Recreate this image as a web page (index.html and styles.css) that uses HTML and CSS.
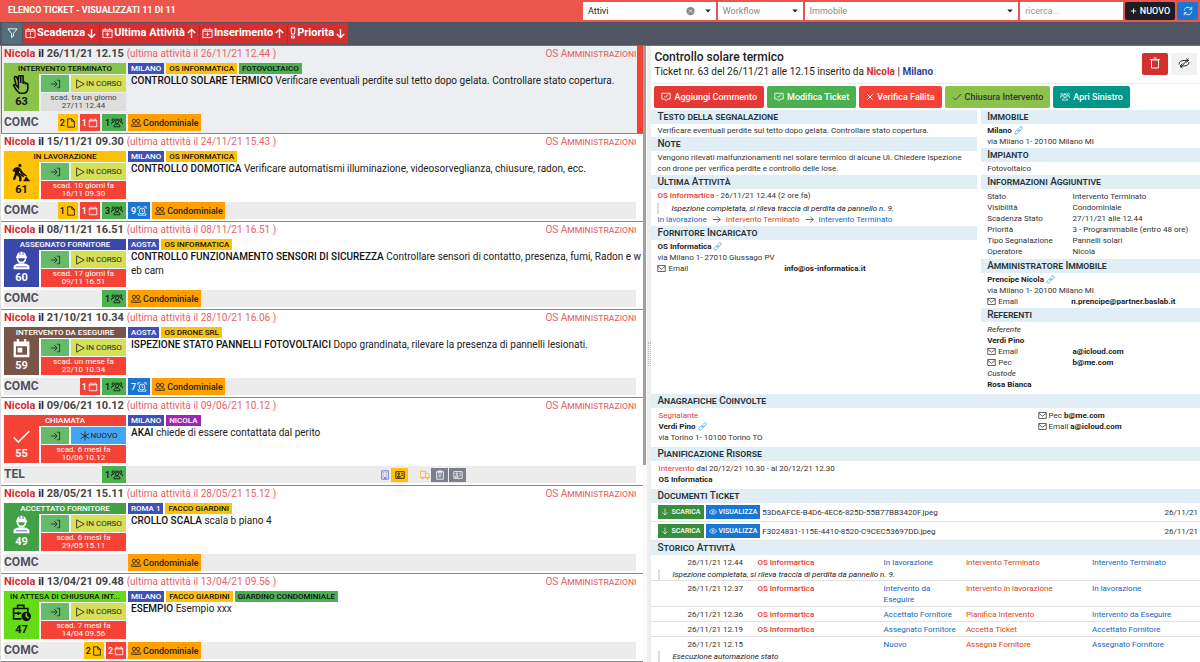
FILE: index.html
```html
<!DOCTYPE html>
<html lang="it">
<head>
<meta charset="utf-8">
<meta name="viewport" content="width=device-width, initial-scale=1">
<title>Elenco Ticket</title>
<link rel="stylesheet" href="styles.css">
</head>
<body>
<svg class="sprite" aria-hidden="true">
  <symbol id="filter" viewBox="0 0 24 24"><path d="M2 3h20l-8 10v6l-4 3v-9z"/></symbol>
  <symbol id="cal-alert" viewBox="0 0 24 24"><path d="M2 5h20v17H2zM2 8h20M7 1v4M17 1v4M12 11v5M12 18v2"/></symbol>
  <symbol id="cal-star" viewBox="0 0 24 24"><path d="M2 5h20v17H2zM2 8h20M7 1v4M17 1v4M12 11v8M8 13l8 4M16 13l-8 4"/></symbol>
  <symbol id="cal-plus" viewBox="0 0 24 24"><path d="M2 5h20v17H2zM2 8h20M7 1v4M17 1v4M12 11v8M8 15h8"/></symbol>
  <symbol id="cal" viewBox="0 0 24 24"><path d="M3 5h18v16H3zM3 7h18M7 1v4M17 1v4"/></symbol>
  <symbol id="prio" viewBox="6 0 12 24"><path d="M8 2h8l-1 12H9zM9 18h6v4H9z"/></symbol>
  <symbol id="down" viewBox="0 0 24 24"><path d="M12 2v19M4 13l8 8 8-8"/></symbol>
  <symbol id="up" viewBox="0 0 24 24"><path d="M12 22V3M4 11l8-8 8 8"/></symbol>
  <symbol id="right" viewBox="0 0 24 24"><path d="M2 12h19M14 4l8 8-8 8"/></symbol>
  <symbol id="login" viewBox="0 0 24 24"><path d="M1 12h14M9 5l7 7-7 7M16 3h6v18h-6"/></symbol>
  <symbol id="play" viewBox="0 0 24 24"><path d="M4 2l18 10L4 22z"/></symbol>
  <symbol id="snow" viewBox="0 0 24 24"><path d="M12 1v22M2 6l20 12M22 6L2 18"/></symbol>
  <symbol id="page" viewBox="0 0 24 24"><path d="M4 2h10l6 6v14H4zM14 2v6h6"/></symbol>
  <symbol id="groups" viewBox="0 0 28 24"><circle cx="14" cy="9" r="4"/><circle cx="5" cy="5" r="3"/><circle cx="23" cy="5" r="3"/><path d="M7 21v-2c0-6 14-6 14 0v2zM1 15v-3c0-2 3-2 6-2M27 15v-3c0-2-3-2-6-2M10 3h8"/></symbol>
  <symbol id="people" viewBox="0 0 24 24"><circle cx="7" cy="7" r="4"/><circle cx="17" cy="7" r="4"/><path d="M1 20v-2c0-5 11-5 11 0v2zM12 20h11v-2c0-4-6-5-9-3"/></symbol>
  <symbol id="alarm" viewBox="0 0 24 24"><circle cx="12" cy="12" r="7"/><path d="M12 8v4l3 2M2 7V2h6M22 7V2h-6M3 17v5h18v-5"/></symbol>
  <symbol id="hand" viewBox="0 0 24 24"><path d="M8 15V3c0-3 3-3 3 0v7V2c0-2 3-2 3 0v9c0-3 3-3 3 0v1c0-2 3-2 3 0v5c0 3-2 5-4 6h-6C6 21 4 17 2 13c1-2 4 0 6 3V7L6 3C5 1 3 2 3 4l2 8"/></symbol>
  <symbol id="digger" viewBox="0 0 24 24"><circle class="solid" cx="10" cy="3" r="2"/><path class="solid" d="M2 7l4-2 4 1 4 6 5 4-1 1-6-3-3-4-1 4 4 3v6H9v-5l-3-3-2 6H1l3-9V9L2 10z"/><path d="M1 9l14 8"/><path class="solid" d="M14 23l4-6 5 6z"/></symbol>
  <symbol id="engineer" viewBox="0 0 24 24"><path class="solid" d="M6 7c0-8 12-8 12 0h1v2H5V7zM2 23v-3c0-6 20-6 20 0v3z"/><path d="M7 9c0 7 10 7 10 0"/><path class="cut" d="M5 20h14M10 1v4M14 1v4"/></symbol>
  <symbol id="event" viewBox="0 0 24 24"><path class="solid" fill-rule="evenodd" d="M2 3h4V0h3v3h6V0h3v3h4v20H2zM5 9v11h14V9zM7 11h6v6H7z"/></symbol>
  <symbol id="check" viewBox="0 0 24 24"><path d="M2 13l6 6L22 5"/></symbol>
  <symbol id="case" viewBox="0 0 24 24"><path d="M12 20H2V7h18v5M7 7V3h8v4M2 13h10M8 11v4"/><circle class="solid" cx="18" cy="17" r="6"/><path class="clock-hand" d="M18 13v4l3 2"/></symbol>
  <symbol id="building" viewBox="0 0 24 24"><path d="M4 2h16v20H4zM8 6h2M14 6h2M8 11h2M14 11h2M8 16h2M14 16h2M11 22v-4h3v4"/></symbol>
  <symbol id="card" viewBox="0 0 24 24"><path d="M2 4h20v16H2zM15 9h4M15 13h4M5 17c0-4 8-4 8 0z"/><circle cx="9" cy="9" r="2"/></symbol>
  <symbol id="truck" viewBox="0 0 24 24"><path d="M1 3h12v15H1zM13 8h6l4 5v5H13"/><circle cx="6" cy="20" r="2"/><circle cx="18" cy="20" r="2"/></symbol>
  <symbol id="clip" viewBox="0 0 24 24"><path d="M4 4h16v18H4zM8 2h8v5H8zM8 12h8M8 16h6"/></symbol>
  <symbol id="comment" viewBox="0 0 24 24"><path d="M2 3h20v14h-7l-3 4-3-4H2zM8 10l3 3 6-7"/></symbol>
  <symbol id="x" viewBox="0 0 24 24"><path d="M4 4l16 16M20 4L4 20"/></symbol>
  <symbol id="plus" viewBox="0 0 24 24"><path d="M12 3v18M3 12h18"/></symbol>
  <symbol id="mail" viewBox="0 0 24 24"><path d="M2 4h20v16H2zM2 6l10 8 10-8"/></symbol>
  <symbol id="link" viewBox="0 0 24 24"><path d="M10 15l7-7M12 7l4-4c4-3 8 2 5 5l-5 5c-2 2-5 1-6-1M12 17l-4 4c-4 3-8-2-5-5l5-5c2-2 5-1 6 1"/></symbol>
  <symbol id="eye" viewBox="0 0 24 24"><path d="M1 12c5-9 17-9 22 0-5 9-17 9-22 0z"/><circle cx="12" cy="12" r="3"/></symbol>
  <symbol id="trash" viewBox="0 0 24 24"><path d="M5 6h14v16H5zM2 5h20M9 2h6"/></symbol>
  <symbol id="unsync" viewBox="0 0 24 24"><path d="M2 15c0-6 5-8 10-8h9M16 3l5 4-5 4M22 10c0 6-5 8-10 8H4M9 13l-5 5 5 4M5 21L21 3"/></symbol>
  <symbol id="refresh" viewBox="0 0 24 24"><path d="M3 11c0-8 12-11 17-4M21 2v6h-6M21 13c0 8-12 11-17 4M3 22v-6h6"/></symbol>
  <symbol id="clear" viewBox="0 0 24 24"><circle class="solid" cx="12" cy="12" r="11"/><path class="cut-white" d="M8 8l8 8M16 8l-8 8"/></symbol>
  <symbol id="caret" viewBox="0 0 24 24"><path class="solid" d="M1 6h22L12 18z"/></symbol>
</svg>

<header class="topbar">
  <h1 class="topbar-title">ELENCO TICKET - VISUALIZZATI 11 DI 11</h1>
  <form class="filters">
    <label class="field field-state"><select aria-label="Stato"><option>Attivi</option></select><svg class="ic ic-clear"><use href="#clear"/></svg><svg class="ic ic-caret"><use href="#caret"/></svg></label>
    <label class="field"><select class="hint" aria-label="Workflow"><option>Workflow</option></select><svg class="ic ic-caret"><use href="#caret"/></svg></label>
    <label class="field"><select class="hint" aria-label="Immobile"><option>Immobile</option></select><svg class="ic ic-caret"><use href="#caret"/></svg></label>
    <label class="field"><input type="text" placeholder="ricerca..." aria-label="Ricerca"></label>
    <button type="button" class="btn-new"><svg class="ic bold"><use href="#plus"/></svg>NUOVO</button>
    <button type="button" class="btn-refresh" aria-label="Aggiorna"><svg class="ic"><use href="#refresh"/></svg></button>
  </form>
</header>

<nav class="toolbar">
  <button class="sort sort-filter" aria-label="Filtra"><svg class="ic"><use href="#filter"/></svg></button>
  <button class="sort"><svg class="ic"><use href="#cal-alert"/></svg>Scadenza<svg class="ic arrow"><use href="#down"/></svg></button>
  <button class="sort"><svg class="ic"><use href="#cal-star"/></svg>Ultima Attività<svg class="ic arrow"><use href="#up"/></svg></button>
  <button class="sort"><svg class="ic"><use href="#cal-plus"/></svg>Inserimento<svg class="ic arrow"><use href="#up"/></svg></button>
  <button class="sort"><svg class="ic narrow"><use href="#prio"/></svg>Priorita<svg class="ic arrow"><use href="#down"/></svg></button>
</nav>

<main class="split">
  <section class="list-pane">
    <div class="tickets">
      <article class="ticket selected">
        <header class="t-head"><p><b class="who">Nicola</b> <b>il</b> <b class="when">26/11/21 12.15</b> <span class="last">(ultima attività il 26/11/21 12.44 )</span></p><p class="admin">OS Amministrazioni</p></header>
        <div class="t-main">
          <div class="status s-lime"><p class="s-title">INTERVENTO TERMINATO</p><div class="s-num"><svg class="ic big"><use href="#hand"/></svg>63</div><div class="s-in"><svg class="ic"><use href="#login"/></svg></div><div class="s-state"><svg class="ic"><use href="#play"/></svg>IN CORSO</div><p class="s-due soft">scad. tra un giorno<br>27/11 12.44</p></div>
          <div class="t-body"><p class="tags"><span class="tag indigo">MILANO</span><span class="tag amber">OS INFORMATICA</span><span class="tag green">FOTOVOLTAICO</span></p><p class="desc"><b>CONTROLLO SOLARE TERMICO</b> Verificare eventuali perdite sul tetto dopo gelata. Controllare stato copertura.</p></div>
        </div>
        <footer class="t-foot"><div class="f-left"><b class="kind">COMC</b><span class="badge amber">2<svg class="ic"><use href="#page"/></svg></span><span class="badge red">1<svg class="ic"><use href="#cal"/></svg></span><span class="badge green">1<svg class="ic wide"><use href="#groups"/></svg></span></div><span class="badge orange"><svg class="ic wide"><use href="#people"/></svg>Condominiale</span></footer>
      </article>

      <article class="ticket">
        <header class="t-head"><p><b class="who">Nicola</b> <b>il</b> <b class="when">15/11/21 09.30</b> <span class="last">(ultima attività il 24/11/21 15.43 )</span></p><p class="admin">OS Amministrazioni</p></header>
        <div class="t-main">
          <div class="status s-amber"><p class="s-title">IN LAVORAZIONE</p><div class="s-num"><svg class="ic big"><use href="#digger"/></svg>61</div><div class="s-in"><svg class="ic"><use href="#login"/></svg></div><div class="s-state"><svg class="ic"><use href="#play"/></svg>IN CORSO</div><p class="s-due">scad. 10 giorni fa<br>16/11 09.30</p></div>
          <div class="t-body"><p class="tags"><span class="tag indigo">MILANO</span><span class="tag amber">OS INFORMATICA</span></p><p class="desc"><b>CONTROLLO DOMOTICA</b> Verificare automatismi illuminazione, videosorveglianza, chiusure, radon, ecc.</p></div>
        </div>
        <footer class="t-foot"><div class="f-left"><b class="kind">COMC</b><span class="badge amber">1<svg class="ic"><use href="#page"/></svg></span><span class="badge red">1<svg class="ic"><use href="#cal"/></svg></span><span class="badge green">3<svg class="ic wide"><use href="#groups"/></svg></span></div><span class="badge blue">9<svg class="ic"><use href="#alarm"/></svg></span><span class="badge orange"><svg class="ic wide"><use href="#people"/></svg>Condominiale</span></footer>
      </article>

      <article class="ticket">
        <header class="t-head"><p><b class="who">Nicola</b> <b>il</b> <b class="when">08/11/21 16.51</b> <span class="last">(ultima attività il 08/11/21 16.51 )</span></p><p class="admin">OS Amministrazioni</p></header>
        <div class="t-main">
          <div class="status s-indigo"><p class="s-title">ASSEGNATO FORNITORE</p><div class="s-num"><svg class="ic big"><use href="#engineer"/></svg>60</div><div class="s-in"><svg class="ic"><use href="#login"/></svg></div><div class="s-state"><svg class="ic"><use href="#play"/></svg>IN CORSO</div><p class="s-due">scad. 17 giorni fa<br>09/11 16.51</p></div>
          <div class="t-body"><p class="tags"><span class="tag indigo">AOSTA</span><span class="tag amber">OS INFORMATICA</span></p><p class="desc"><b>CONTROLLO FUNZIONAMENTO SENSORI DI SICUREZZA</b> Controllare sensori di contatto, presenza, fumi, Radon e web cam</p></div>
        </div>
        <footer class="t-foot"><div class="f-left"><b class="kind">COMC</b><span class="badge green">1<svg class="ic wide"><use href="#groups"/></svg></span></div><span class="badge orange"><svg class="ic wide"><use href="#people"/></svg>Condominiale</span></footer>
      </article>

      <article class="ticket">
        <header class="t-head"><p><b class="who">Nicola</b> <b>il</b> <b class="when">21/10/21 10.34</b> <span class="last">(ultima attività il 28/10/21 16.06 )</span></p><p class="admin">OS Amministrazioni</p></header>
        <div class="t-main">
          <div class="status s-brown"><p class="s-title">INTERVENTO DA ESEGUIRE</p><div class="s-num"><svg class="ic big"><use href="#event"/></svg>59</div><div class="s-in"><svg class="ic"><use href="#login"/></svg></div><div class="s-state"><svg class="ic"><use href="#play"/></svg>IN CORSO</div><p class="s-due">scad. un mese fa<br>22/10 10.34</p></div>
          <div class="t-body"><p class="tags"><span class="tag indigo">AOSTA</span><span class="tag amber">OS DRONE SRL</span></p><p class="desc"><b>ISPEZIONE STATO PANNELLI FOTOVOLTAICI</b> Dopo grandinata, rilevare la presenza di pannelli lesionati.</p></div>
        </div>
        <footer class="t-foot"><div class="f-left"><b class="kind">COMC</b><span class="badge red">1<svg class="ic"><use href="#cal"/></svg></span><span class="badge green">1<svg class="ic wide"><use href="#groups"/></svg></span></div><span class="badge blue">7<svg class="ic"><use href="#alarm"/></svg></span><span class="badge orange"><svg class="ic wide"><use href="#people"/></svg>Condominiale</span></footer>
      </article>

      <article class="ticket">
        <header class="t-head"><p><b class="who">Nicola</b> <b>il</b> <b class="when">09/06/21 10.12</b> <span class="last">(ultima attività il 09/06/21 10.12 )</span></p><p class="admin">OS Amministrazioni</p></header>
        <div class="t-main">
          <div class="status s-red"><p class="s-title">CHIAMATA</p><div class="s-num"><svg class="ic big"><use href="#check"/></svg>55</div><div class="s-in"><svg class="ic"><use href="#login"/></svg></div><div class="s-state new"><svg class="ic"><use href="#snow"/></svg>NUOVO</div><p class="s-due">scad. 6 mesi fa<br>10/06 10.12</p></div>
          <div class="t-body"><p class="tags"><span class="tag indigo">MILANO</span><span class="tag purple">NICOLA</span></p><p class="desc"><b>AKAI</b> chiede di essere contattata dal perito</p></div>
        </div>
        <footer class="t-foot"><div class="f-left"><b class="kind">TEL</b><span class="badge green">1<svg class="ic wide"><use href="#groups"/></svg></span></div>
          <div class="f-icons"><span class="mini lilac"><svg class="ic"><use href="#building"/></svg></span><span class="mini chip amber"><svg class="ic wide"><use href="#card"/></svg></span><span class="mini gold"><svg class="ic"><use href="#truck"/></svg></span><span class="mini chip gray"><svg class="ic"><use href="#clip"/></svg></span><span class="mini chip gray"><svg class="ic wide"><use href="#card"/></svg></span></div></footer>
      </article>

      <article class="ticket">
        <header class="t-head"><p><b class="who">Nicola</b> <b>il</b> <b class="when">28/05/21 15.11</b> <span class="last">(ultima attività il 28/05/21 15.12 )</span></p><p class="admin">OS Amministrazioni</p></header>
        <div class="t-main">
          <div class="status s-green"><p class="s-title">ACCETTATO FORNITORE</p><div class="s-num"><svg class="ic big"><use href="#engineer"/></svg>49</div><div class="s-in"><svg class="ic"><use href="#login"/></svg></div><div class="s-state"><svg class="ic"><use href="#play"/></svg>IN CORSO</div><p class="s-due">scad. 6 mesi fa<br>29/05 15.11</p></div>
          <div class="t-body"><p class="tags"><span class="tag indigo">ROMA 1</span><span class="tag amber">FACCO GIARDINI</span></p><p class="desc"><b>CROLLO SCALA</b> scala b piano 4</p></div>
        </div>
        <footer class="t-foot"><div class="f-left"><b class="kind">COMC</b></div><span class="badge orange"><svg class="ic wide"><use href="#people"/></svg>Condominiale</span></footer>
      </article>

      <article class="ticket">
        <header class="t-head"><p><b class="who">Nicola</b> <b>il</b> <b class="when">13/04/21 09.48</b> <span class="last">(ultima attività il 13/04/21 09.56 )</span></p><p class="admin">OS Amministrazioni</p></header>
        <div class="t-main">
          <div class="status s-bright"><p class="s-title">IN ATTESA DI CHIUSURA INT...</p><div class="s-num"><svg class="ic big"><use href="#case"/></svg>47</div><div class="s-in"><svg class="ic"><use href="#login"/></svg></div><div class="s-state"><svg class="ic"><use href="#play"/></svg>IN CORSO</div><p class="s-due">scad. 7 mesi fa<br>14/04 09.56</p></div>
          <div class="t-body"><p class="tags"><span class="tag indigo">MILANO</span><span class="tag amber">FACCO GIARDINI</span><span class="tag green">GIARDINO CONDOMINIALE</span></p><p class="desc"><b>ESEMPIO</b> Esempio xxx</p></div>
        </div>
        <footer class="t-foot"><div class="f-left"><b class="kind">COMC</b><span class="badge amber">2<svg class="ic"><use href="#page"/></svg></span><span class="badge red">2<svg class="ic"><use href="#cal"/></svg></span></div><span class="badge orange"><svg class="ic wide"><use href="#people"/></svg>Condominiale</span></footer>
      </article>
    </div>
    <div class="scroll"><div class="thumb"></div></div>
  </section>
  <div class="splitter"><div class="grip"></div></div>

  <section class="detail">
    <header class="d-head">
      <div><h2 class="d-title">Controllo solare termico</h2><p class="d-sub">Ticket nr. 63 del 26/11/21 alle 12.15 inserito da <b class="who">Nicola</b> | <b class="place">Milano</b></p></div>
      <div class="d-tools"><button class="tool danger" aria-label="Elimina"><svg class="ic"><use href="#trash"/></svg></button><button class="tool" aria-label="Sincronizzazione"><svg class="ic"><use href="#unsync"/></svg></button></div>
    </header>
    <div class="actions">
      <button class="act a-red"><svg class="ic"><use href="#comment"/></svg>Aggiungi Commento</button>
      <button class="act a-green"><svg class="ic"><use href="#comment"/></svg>Modifica Ticket</button>
      <button class="act a-tomato"><svg class="ic small"><use href="#x"/></svg>Verifica Fallita</button>
      <button class="act a-lime"><svg class="ic"><use href="#check"/></svg>Chiusura Intervento</button>
      <button class="act a-teal"><svg class="ic"><use href="#groups"/></svg>Apri Sinistro</button>
    </div>
    <div class="cols">
      <div class="col">
        <h3 class="sec">Testo della segnalazione</h3>
        <div class="body"><p>Verificare eventuali perdite sul tetto dopo gelata. Controllare stato copertura.</p></div>
        <h3 class="sec">Note</h3>
        <div class="body"><p>Vengono rilevati malfunzionamenti nel solare termico di alcune UI. Chiedere ispezione con drone per verifica perdite e controllo delle lose.</p></div>
        <h3 class="sec">Ultima Attività</h3>
        <div class="body"><p><b class="os">OS Informartica</b> - 26/11/21 12.44 (2 ore fa)</p><blockquote class="quote">Ispezione completata, si rileva traccia di perdita da pannello n. 9.</blockquote><p class="flow"><span class="st">In lavorazione</span><svg class="ic"><use href="#right"/></svg><span class="ev">Intervento Terminato</span><svg class="ic"><use href="#right"/></svg><span class="st">Intervento Terminato</span></p></div>
        <h3 class="sec">Fornitore Incaricato</h3>
        <div class="body"><p><b>OS Informatica</b> <svg class="ic link"><use href="#link"/></svg></p><p>via Milano 1- 27010 Giussago PV</p><dl class="pairs even"><dt><svg class="ic"><use href="#mail"/></svg> Email</dt><dd><b>info@os-informatica.it</b></dd></dl></div>
      </div>
      <div class="col">
        <h3 class="sec">Immobile</h3>
        <div class="body"><p><b>Milano</b> <svg class="ic link"><use href="#link"/></svg></p><p>via Milano 1- 20100 Milano MI</p></div>
        <h3 class="sec">Impianto</h3>
        <div class="body"><p>Fotovoltaico</p></div>
        <h3 class="sec">Informazioni Aggiuntive</h3>
        <div class="body long"><dl class="pairs"><dt>Stato</dt><dd>Intervento Terminato</dd><dt>Visibilità</dt><dd>Condominiale</dd><dt>Scadenza Stato</dt><dd>27/11/21 alle 12.44</dd><dt>Priorità</dt><dd>3 - Programmabile (entro 48 ore)</dd><dt>Tipo Segnalazione</dt><dd>Pannelli solari</dd><dt>Operatore</dt><dd>Nicola</dd></dl></div>
        <h3 class="sec">Amministratore Immobile</h3>
        <div class="body"><p><b>Prencipe Nicola</b> <svg class="ic link"><use href="#link"/></svg></p><p>via Milano 1- 20100 Milano MI</p><dl class="pairs"><dt><svg class="ic"><use href="#mail"/></svg> Email</dt><dd><b>n.prencipe@partner.baslab.it</b></dd></dl></div>
        <h3 class="sec">Referenti</h3>
        <div class="body long"><p class="role">Referente</p><p><b>Verdi Pino</b></p><dl class="pairs"><dt><svg class="ic"><use href="#mail"/></svg> Email</dt><dd><b>a@icloud.com</b></dd><dt><svg class="ic"><use href="#mail"/></svg> Pec</dt><dd><b>b@me.com</b></dd></dl><p class="role">Custode</p><p><b>Rosa Bianca</b></p></div>
      </div>
    </div>
    <h3 class="sec">Anagrafiche Coinvolte</h3>
    <div class="body wide-body people-row">
      <div><p class="ev2">Segnalante</p><p><b>Verdi Pino</b> <svg class="ic link"><use href="#link"/></svg></p><p>via Torino 1- 10100 Torino TO</p></div>
      <div><p><svg class="ic"><use href="#mail"/></svg> Pec <b>b@me.com</b></p><p><svg class="ic"><use href="#mail"/></svg> Email <b>a@icloud.com</b></p></div>
    </div>
    <h3 class="sec">Pianificazione Risorse</h3>
    <div class="body wide-body"><p><span class="ev2">Intervento</span> dal 20/12/21 10.30 - al 20/12/21 12.30</p><p><b>OS Informatica</b></p></div>
    <h3 class="sec">Documenti Ticket</h3>
    <ul class="docs">
      <li><button class="doc-btn dl"><svg class="ic"><use href="#down"/></svg>SCARICA</button><button class="doc-btn view"><svg class="ic"><use href="#eye"/></svg>VISUALIZZA</button><span class="file">53D6AFCE-B4D6-4EC6-825D-55B77BB3420F.jpeg</span><span>26/11/21</span></li>
      <li><button class="doc-btn dl"><svg class="ic"><use href="#down"/></svg>SCARICA</button><button class="doc-btn view"><svg class="ic"><use href="#eye"/></svg>VISUALIZZA</button><span class="file">F3024831-115E-4410-8520-C9CEC53697DD.jpeg</span><span>26/11/21</span></li>
    </ul>
    <h3 class="sec">Storico Attività</h3>
    <table class="history">
      <colgroup><col class="c-date"><col class="c-who"><col class="c-from"><col class="c-event"><col class="c-to"></colgroup>
      <tbody><tr><td>26/11/21 12.44</td><td class="os">OS Informartica</td><td class="st">In lavorazione</td><td class="ev">Intervento Terminato</td><td class="st">Intervento Terminato</td></tr>
      <tr class="note"><td colspan="5"><blockquote class="quote">Ispezione completata, si rileva traccia di perdita da pannello n. 9.</blockquote></td></tr></tbody>
      <tbody><tr><td>26/11/21 12.37</td><td class="os">OS Informartica</td><td class="st">Intervento da Eseguire</td><td class="ev">Intervento in lavorazione</td><td class="st">In lavorazione</td></tr></tbody>
      <tbody><tr><td>26/11/21 12.36</td><td class="os">OS Informartica</td><td class="st">Accettato Fornitore</td><td class="ev">Pianifica Intervento</td><td class="st">Intervento da Eseguire</td></tr></tbody>
      <tbody><tr><td>26/11/21 12.19</td><td class="os">OS Informartica</td><td class="st">Assegnato Fornitore</td><td class="ev">Accetta Ticket</td><td class="st">Accettato Fornitore</td></tr></tbody>
      <tbody><tr><td>26/11/21 12.15</td><td></td><td class="st">Nuovo</td><td class="ev">Assegna Fornitore</td><td class="st">Assegnato Fornitore</td></tr>
      <tr class="note"><td colspan="5"><blockquote class="quote">Esecuzione automazione stato</blockquote></td></tr></tbody>
    </table>
  </section>
</main>
</body>
</html>
```

FILE: styles.css
```css
* { box-sizing: border-box; }
body { margin: 0; height: 100vh; display: flex; flex-direction: column; overflow: hidden; font-family: Roboto, "Liberation Sans", sans-serif; font-size: 9px; line-height: 12px; color: #222; background: #fff; }
h1, h2, h3, p, ul, dl, dd, blockquote { margin: 0; padding: 0; }
b { font-weight: 700; }
button, input, select { font: inherit; color: inherit; border: 0; margin: 0; padding: 0; }
.sprite { display: none; }
.ic { width: 10px; height: 10px; flex: none; fill: none; stroke: currentColor; stroke-width: 2; vertical-align: -2px; }
.ic.wide { width: 12px; }
.ic.bold { stroke-width: 3; }
.ic.small { width: 8px; height: 8px; stroke-width: 3; }
.solid { fill: currentColor; stroke: none; }
.cut { stroke: #3949ab; stroke-width: 1; }
.cut-white { stroke: #fff; }
.clock-hand { stroke: #64dd17; }

.topbar { height: 22px; flex: none; display: flex; align-items: center; justify-content: space-between; background: #ec554b; color: #fff; padding: 0 2px 2px 8px; }
.topbar-title { font-size: 9px; font-weight: 700; line-height: 20px; }
.filters { display: grid; grid-template-columns: 133fr 85fr 214fr 103fr 50px 21px; gap: 2px; width: 52%; max-width: 615px; height: 18px; margin-top: 1px; }
.field { display: flex; align-items: center; background: #fff; padding: 0 5px; min-width: 0; }
.field select, .field input { flex: 1; min-width: 0; width: 100%; appearance: none; background: none; outline: 0; color: #222; height: 18px; }
.field select.hint { color: #888; }
.field input::placeholder { color: #999; opacity: 1; }
.field-state { gap: 10px; }
.ic-clear { color: #888; width: 9px; }
.ic-caret { color: #222; width: 6px; }
.btn-new { border-radius: 2px; background: #1d1d26; color: #fff; font-weight: 500; display: flex; align-items: center; justify-content: center; gap: 3px; }
.btn-new .ic { width: 7px; }
.btn-refresh { border-radius: 2px; background: #1976d2; color: #fff; }

.toolbar { height: 24px; flex: none; display: flex; align-items: center; gap: 1px; background: #505562; padding: 0 2px 1px; border-bottom: 1px solid #6d717c; }
.sort { height: 21px; display: flex; align-items: center; gap: 1px; padding: 0 2px; background: #d32f2f; color: #fff; font-size: 11px; font-weight: 700; }
.sort .ic { width: 11px; height: 12px; }
.sort .ic.arrow { width: 11px; height: 11px; stroke-width: 3; }
.sort .ic.narrow { width: 6px; }
.sort-filter { background: #546e7a; width: 20px; justify-content: center; }

.split { flex: 1; min-height: 0; display: flex; }
.list-pane { flex: 647; min-width: 0; display: flex; overflow: hidden; border-left: 1px solid #ddd; }
.tickets { flex: 1; min-width: 0; }
.scroll { width: 4px; background: #fafafa; }
.thumb { height: 68%; background: #a0a0a0; width: 3px; }
.splitter { width: 4px; flex: none; background: #eee; display: flex; align-items: center; justify-content: center; }
.grip { width: 3px; height: 24px; border-left: 1px dotted #bbb; border-right: 1px dotted #bbb; }

.ticket { height: 88px; border-bottom: 1px solid #888; padding: 0 7px 0 3px; display: flex; flex-direction: column; }
.ticket.selected { background: #eceef1; border-left: 1px solid #f44336; border-right: 6px solid #f44336; padding: 0 1px 0 2px; }
.t-head { display: flex; justify-content: space-between; font-size: 11px; line-height: 15px; height: 17px; white-space: nowrap; color: #222; }
.who { color: #d32f2f; }
.when { color: #444; }
.last, .admin { color: #e5636a; font-size: 10px; }
.admin { font-variant: small-caps; }
.t-main { display: flex; gap: 2px; height: 51px; }
.status { width: 122px; flex: none; height: 48px; display: grid; grid-template-columns: 35px 28px 55px; grid-template-rows: 11px 19px 18px; column-gap: 2px; }
.s-title { grid-column: 1 / -1; font-size: 8px; line-height: 11px; font-weight: 500; text-align: center; white-space: nowrap; background: var(--c); color: var(--t); }
.s-num { grid-row: 2 / 4; background: var(--c); color: var(--t); display: flex; flex-direction: column; align-items: center; justify-content: space-between; font-size: 11px; line-height: 14px; font-weight: 700; padding: 1px 0 2px; }
.ic.big { width: 19px; height: 19px; }
.s-in, .s-state { margin: 1px 0; background: #66bb6a; color: #222; display: flex; align-items: center; justify-content: center; gap: 1px; font-size: 8px; white-space: nowrap; }
.s-in .ic { width: 11px; }
.s-state { background: #d4e157; }
.s-state.new { background: #42a5f5; }
.s-due { grid-column: 2 / 4; background: #f44336; color: #fff; text-align: center; font-size: 8px; line-height: 8px; padding-top: 1px; }
.s-due.soft { background: #dedede; color: #444; }
.s-lime { --c: #8bc34a; --t: #111; }
.s-amber { --c: #ffc107; --t: #111; }
.s-indigo { --c: #3949ab; --t: #fff; }
.s-brown { --c: #795548; --t: #fff; }
.s-red { --c: #f44336; --t: #fff; }
.s-green { --c: #43a047; --t: #fff; }
.s-bright { --c: #64dd17; --t: #111; }
.t-body { flex: 1; min-width: 0; margin-right: -7px; }
.selected .t-body { margin-right: 0; }
.tags { display: flex; gap: 2px; height: 11px; }
.tag { font-size: 8px; line-height: 11px; font-weight: 500; padding: 0 3px; white-space: nowrap; }
.desc { font-size: 10px; line-height: 14px; padding-left: 3px; word-break: break-all; }
.desc b { font-weight: 500; color: #111; }
.indigo { background: #3f51b5; color: #fff; }
.amber { background: #ffc107; color: #111; }
.green { background: #4caf50; color: #111; }
.purple { background: #9c27b0; color: #fff; }
.red { background: #f44336; color: #fff; }
.blue { background: #1976d2; color: #fff; }
.orange { background: #ffa000; color: #222; }
.gray { background: #7a7f8c; color: #fff; }
.t-foot { display: flex; gap: 2px; height: 17px; background: #ececec; }
.selected .t-foot { background: none; }
.f-left { width: 122px; display: flex; gap: 2px; }
.kind { flex: 1; font-size: 12px; line-height: 16px; color: #50505f; font-weight: 700; }
.badge { height: 17px; display: flex; align-items: center; gap: 1px; padding: 0 2px; font-size: 9px; font-weight: 500; white-space: nowrap; }
.badge.green, .badge.blue { padding: 0 3px; }
.f-icons { flex: 1; display: flex; justify-content: center; align-items: center; gap: 1px; padding-left: 13%; }
.mini { display: flex; align-items: center; justify-content: center; height: 14px; }
.chip { width: 17px; }
.lilac { color: #5c6bc0; }
.gold { color: #ffb300; margin-left: 11px; }

.detail { flex: 549; min-width: 0; overflow: hidden; line-height: 11px; font-size: 8px; color: #333; }
.d-head { height: 38px; display: flex; justify-content: space-between; align-items: center; padding: 0 3px 2px; border-bottom: 1px solid #ececec; color: #222; }
.d-title { font-size: 12px; line-height: 16px; font-weight: 500; }
.d-sub { font-size: 10px; line-height: 14px; }
.place { color: #303f9f; }
.d-tools { display: flex; gap: 3px; }
.tool { width: 26px; height: 22px; border-radius: 2px; background: #f2f2f2; color: #333; }
.tool.danger { background: #d32f2f; color: #fff; }
.tool .ic { width: 12px; height: 12px; }
.actions { display: flex; gap: 3px; padding: 2px 3px; }
.act { height: 22px; border-radius: 2px; color: #fff; font-size: 9px; font-weight: 500; padding: 0 7px; display: flex; align-items: center; gap: 3px; white-space: nowrap; }
.a-red { background: #e53935; }
.a-green { background: #4caf50; }
.a-tomato { background: #f44336; }
.a-lime { background: #8bc34a; color: #333; }
.a-teal { background: #009688; }
.cols { display: grid; grid-template-columns: 326fr 219fr; column-gap: 4px; min-height: 284px; }
.sec { height: 14px; font-size: 10px; line-height: 14px; font-weight: 500; font-variant: small-caps; background: #e1eef5; padding-left: 6px; color: #263238; }
.body { padding: 1px 3px 1px 6px; }
.body.long { padding: 2px 0 2px 6px; }
.body b { color: #222; }
.os { color: #e53935; font-weight: 500; }
.body .os { color: #e53935; }
.st { color: #1565c0; }
.ev { color: #d84315; }
.ev2 { color: #e53935; }
.role { font-style: italic; font-weight: 500; color: #555; }
.quote { font-style: italic; border-left: 2px solid #ddd; padding-left: 12px; color: #222; }
.body .quote { margin: 2px 0 0; }
.flow { display: flex; align-items: center; gap: 5px; }
.body .ic { width: 9px; height: 9px; vertical-align: -2px; }
.body .link { color: #42a5f5; }
.pairs { display: grid; grid-template-columns: 85fr 127fr; white-space: nowrap; }
.pairs.even { grid-template-columns: 40% 60%; }
.wide-body { padding: 2px 0 4px 7px; }
.people-row { display: grid; grid-template-columns: 70% 30%; }
.docs { list-style: none; }
.docs li { display: flex; align-items: center; gap: 2px; padding: 1px 2px 1px 7px; height: 19px; border-bottom: 1px solid #e4e4e4; }
.doc-btn { height: 14px; color: #fff; font-size: 7px; font-weight: 500; padding: 0 3px; display: flex; align-items: center; gap: 2px; }
.doc-btn .ic { width: 8px; height: 8px; }
.dl { background: #388e3c; }
.view { background: #1976d2; }
.file { flex: 1; }
.history { width: 100%; border-collapse: collapse; table-layout: fixed; }
.history tbody { border-bottom: 1px solid #e0e0e0; }
.history td { padding: 2px 0 1px; vertical-align: top; }
.history td:first-child { padding-left: 36px; }
.history td:nth-child(3) { padding-right: 6px; }
.history .note td:first-child { padding: 0 0 0 7px; }
.c-date { width: 106px; }
.c-who { width: 23%; }
.c-from { width: 15%; }
.c-event { width: 23%; }
```
